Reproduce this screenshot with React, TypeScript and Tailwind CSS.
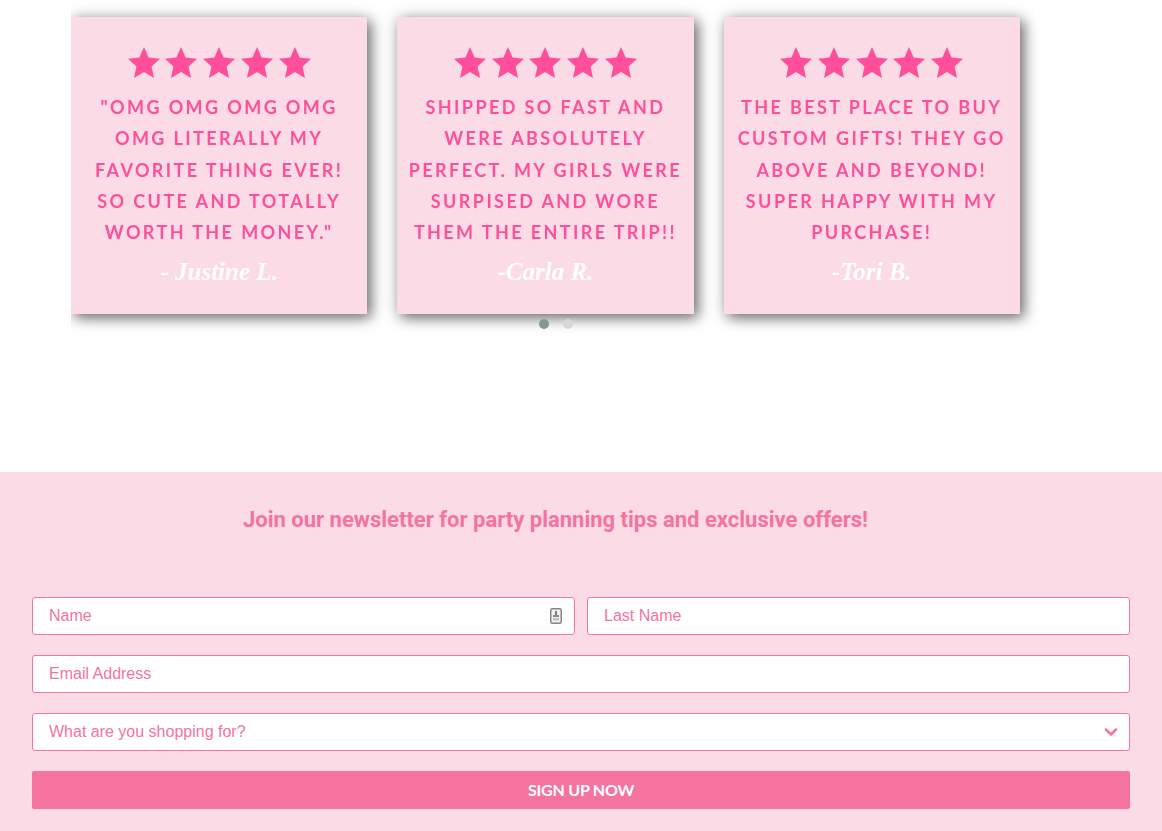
import { ChevronDown } from "lucide-react";

interface Review {
    lines: string[];
    author: string;
}

const reviews: Review[] = [
    {
        lines: ['"OMG OMG OMG OMG', "OMG LITERALLY MY", "FAVORITE THING EVER!", "SO CUTE AND TOTALLY", 'WORTH THE MONEY."'],
        author: "- Justine L.",
    },
    {
        lines: ["SHIPPED SO FAST AND", "WERE ABSOLUTELY", "PERFECT. MY GIRLS WERE", "SURPISED AND WORE", "THEM THE ENTIRE TRIP!!"],
        author: "-Carla R.",
    },
    {
        lines: ["THE BEST PLACE TO BUY", "CUSTOM GIFTS! THEY GO", "ABOVE AND BEYOND!", "SUPER HAPPY WITH MY", "PURCHASE!"],
        author: "-Tori B.",
    },
];

const Star = () => (
    <svg viewBox="0 0 32 31" className="w-8 h-[31px] shrink-0 fill-[#ff4f9a]">
        <polygon points="16,0 20.6,10.6 32,11.7 23.6,19.4 26,31 16,25 6,31 8.4,19.4 0,11.7 11.4,10.6" />
    </svg>
);

const ReviewCard = ({ review }: { review: Review }) => (
    <div className="w-[296.3px] h-[297px] shrink-0 bg-[#fbdbe5] shadow-[4px_4px_13px_rgba(0,0,0,0.55),0_0_16px_rgba(0,0,0,0.12)] flex flex-col items-center pt-[30px]">
        <div className="flex gap-[5.75px] blur-[0.3px]">
            {[0, 1, 2, 3, 4].map((i) => (
                <Star key={i} />
            ))}
        </div>
        <div className="mt-[14px] text-center font-['Lato',sans-serif] font-bold text-[18px] leading-[31.3px] tracking-[2.4px] text-[#ff4f9a] blur-[0.4px] whitespace-nowrap">
            {review.lines.map((line) => (
                <div key={line}>{line}</div>
            ))}
        </div>
        <div className="mt-[8px] font-['Liberation_Serif',serif] italic font-bold text-[25px] leading-[32px] text-white blur-[0.4px]">
            {review.author}
        </div>
    </div>
);

const inputClass =
    "w-full h-[38px] bg-white border border-[#f5739f] rounded-[3px] pl-4 pr-8 text-base text-[#f5739f] placeholder:text-[#f5739f] font-['Liberation_Sans',sans-serif] outline-none";

export default function App() {
    return (
        <div className="w-full min-h-[831px] bg-white font-['Liberation_Sans',sans-serif]">
            <div className="relative h-[472px] pl-[71px]">
                <div className="w-[970px] h-[334px] overflow-hidden pt-[17px] flex gap-[30px]">
                    {reviews.map((review) => (
                        <ReviewCard key={review.author} review={review} />
                    ))}
                </div>
                <div className="absolute top-[319px] left-[539px] flex gap-[14px]">
                    <span className="w-2.5 h-2.5 rounded-full bg-[#869791]" />
                    <span className="w-2.5 h-2.5 rounded-full bg-[#d6d6d6]" />
                </div>
            </div>

            <div className="bg-[#fbdbe5] h-[359px] px-8 pt-[34px]">
                <h2 className="pr-[51px] text-center font-['Roboto',sans-serif] font-bold text-[22px] leading-[28px] text-[#f5739f]">
                    Join our newsletter for party planning tips and exclusive offers!
                </h2>
                <form className="mt-[63px] flex flex-col gap-5">
                    <div className="grid grid-cols-2 gap-3">
                        <div className="relative">
                            <input className={inputClass} placeholder="Name" />
                            <svg viewBox="0 0 12 16" className="absolute right-[13px] top-[11px] w-3 h-4">
                                <rect x="0.75" y="0.75" width="10.5" height="14.5" rx="1.5" fill="#f0f0f0" stroke="#868686" strokeWidth="1.5" />
                                <rect x="5" y="3" width="2" height="4" fill="#7d7d7d" />
                                <rect x="3" y="7" width="6" height="2" fill="#8a8a8a" />
                                <rect x="3" y="10" width="6" height="2.5" fill="#c4c4c4" />
                            </svg>
                        </div>
                        <input className={inputClass} placeholder="Last Name" />
                    </div>
                    <input className={inputClass} placeholder="Email Address" />
                    <div className="relative">
                        <select className={`${inputClass} appearance-none`} defaultValue="">
                            <option value="">What are you shopping for?</option>
                        </select>
                        <ChevronDown
                            size={20}
                            strokeWidth={3}
                            className="absolute right-[9.5px] top-[9px] text-[#f5739f]"
                        />
                    </div>
                    <button
                        type="button"
                        className="h-[38px] bg-[#f5739f] rounded-[2px] text-white text-base tracking-[-0.2px] font-bold font-['Lato',sans-serif]"
                    >
                        SIGN UP NOW
                    </button>
                </form>
            </div>
        </div>
    );
}
